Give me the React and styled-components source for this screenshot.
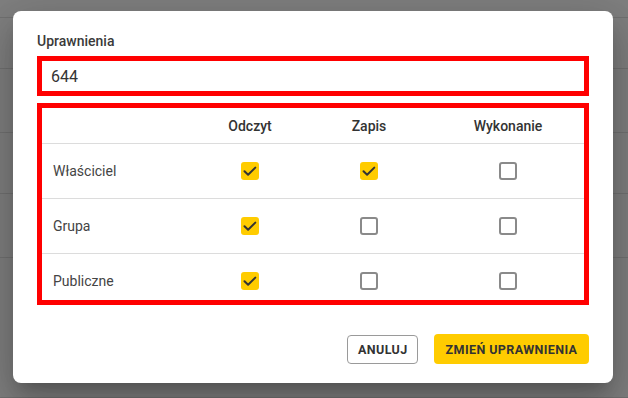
import React from "react";
import styled, { createGlobalStyle } from "styled-components";

const Global = createGlobalStyle`
  html, body { margin: 0; padding: 0; width: 628px; height: 398px; overflow: hidden; background: #fff; }
  body { font-family: Roboto, "Liberation Sans", sans-serif; }
  * { box-sizing: border-box; }
`;

const Page = styled.div`
  position: relative;
  width: 628px;
  height: 398px;
  overflow: hidden;
`;

const BgRow = styled.div`
  height: ${(p) => p.$h}px;
  border-bottom: 1px solid #e2e2e2;
`;

const Backdrop = styled.div`
  position: absolute;
  inset: 0;
  background: rgba(0, 0, 0, 0.5);
`;

const Dialog = styled.div`
  position: absolute;
  left: 13px;
  top: 11px;
  width: 600px;
  height: 372px;
  background: #fff;
  border-radius: 8px;
  box-shadow: 0 11px 15px -7px rgba(0,0,0,0.2), 0 24px 38px 3px rgba(0,0,0,0.14), 0 9px 46px 8px rgba(0,0,0,0.12);
  padding: 20px 24px 19px;
  display: flex;
  flex-direction: column;
`;

const Label = styled.div`
  font-size: 14px;
  line-height: 20px;
  font-weight: 500;
  color: #3a3a3a;
  margin-bottom: 5px;
`;

const Input = styled.div`
  height: 40px;
  border: 5px solid #ff0000;
  padding: 0 9px;
  display: flex;
  align-items: center;
  font-size: 16px;
  color: #333;
`;

const Table = styled.div`
  margin-top: 7px;
  height: 202px;
  border: 5px solid #ff0000;
  overflow: hidden;
`;

const Row = styled.div`
  display: grid;
  grid-template-columns: 149px 118px 120px 1fr;
  height: ${(p) => (p.$head ? 36 : 55)}px;
  border-bottom: 1px solid #dcdcdc;
  align-items: center;
`;

const HeadCell = styled.div`
  text-align: center;
  font-size: 14px;
  font-weight: 500;
  color: #333;
  padding-left: ${(p) => (p.$shift ? 3 : 0)}px;
`;

const NameCell = styled.div`
  padding-left: 11px;
  font-size: 14px;
  color: #444;
`;

const BoxCell = styled.div`
  display: flex;
  justify-content: center;
  padding-left: ${(p) => (p.$shift ? 3 : 0)}px;
`;

const Box = styled.div`
  width: 18px;
  height: 18px;
  border-radius: 3px;
  background: ${(p) => (p.$on ? "#ffcc00" : "#fff")};
  border: ${(p) => (p.$on ? "none" : "2px solid #8a8a8a")};
  display: flex;
  align-items: center;
  justify-content: center;
`;

const Actions = styled.div`
  margin-top: auto;
  display: flex;
  justify-content: flex-end;
  gap: 16px;
  align-items: center;
`;

const Button = styled.button`
  font-family: Roboto, "Liberation Sans", sans-serif;
  font-size: 12.5px;
  font-weight: 700;
  letter-spacing: 0.4px;
  color: #333;
  border-radius: 4px;
  padding: 0 10px;
  height: ${(p) => (p.$primary ? 30 : 29)}px;
  width: ${(p) => (p.$primary ? 155 : 71)}px;
  background: ${(p) => (p.$primary ? "#ffcc00" : "#fff")};
  border: ${(p) => (p.$primary ? "none" : "1px solid #9a9a9a")};
  text-transform: uppercase;
  white-space: nowrap;
`;

const Check = () => (
  <svg width="18" height="18" viewBox="0 0 18 18">
    <path d="M3.5 9.2l3.6 3.5L14.3 5.6" fill="none" stroke="#333" strokeWidth="2" strokeLinecap="round" strokeLinejoin="round" />
  </svg>
);

const rows = [
  ["Właściciel", [true, true, false]],
  ["Grupa", [true, false, false]],
  ["Publiczne", [true, false, false]],
];

export default function App() {
  return (
    <Page>
      <Global />
      {[18, 51, 64, 61, 64, 140].map((h, i) => (
        <BgRow key={i} $h={h} />
      ))}
      <Backdrop />
      <Dialog>
        <Label>Uprawnienia</Label>
        <Input>644</Input>
        <Table>
          <Row $head>
            <div />
            <HeadCell>Odczyt</HeadCell>
            <HeadCell>Zapis</HeadCell>
            <HeadCell $shift>Wykonanie</HeadCell>
          </Row>
          {rows.map(([name, vals]) => (
            <Row key={name}>
              <NameCell>{name}</NameCell>
              {vals.map((v, i) => (
                <BoxCell key={i} $shift={i === 2}>
                  <Box $on={v}>{v && <Check />}</Box>
                </BoxCell>
              ))}
            </Row>
          ))}
        </Table>
        <Actions>
          <Button>Anuluj</Button>
          <Button $primary>Zmień uprawnienia</Button>
        </Actions>
      </Dialog>
    </Page>
  );
}
